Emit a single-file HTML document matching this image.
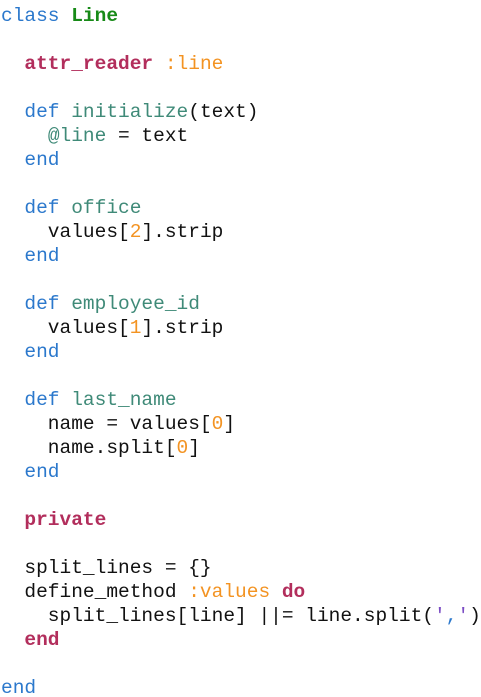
<!DOCTYPE html>
<html><head><meta charset="utf-8"><style>
html,body{margin:0;padding:0;background:#fff;width:481px;height:697px;overflow:hidden}
pre{margin:0;padding:4px 0 0 1px;font-family:"Liberation Mono",monospace;font-size:19.5px;line-height:24px;color:#111}
.k{color:#2b78cc}.c{color:#178a17;font-weight:bold}.r{color:#b22e5c;font-weight:bold}
.s{color:#f39322}.f{color:#3f8a78}.n{color:#f39322}.q{color:#7b4cc4}
</style></head><body><pre><span class="k">class</span> <span class="c">Line</span>

  <span class="r">attr_reader</span> <span class="s">:line</span>

  <span class="k">def</span> <span class="f">initialize</span>(text)
    <span class="f">@line</span> = text
  <span class="k">end</span>

  <span class="k">def</span> <span class="f">office</span>
    values[<span class="n">2</span>].strip
  <span class="k">end</span>

  <span class="k">def</span> <span class="f">employee_id</span>
    values[<span class="n">1</span>].strip
  <span class="k">end</span>

  <span class="k">def</span> <span class="f">last_name</span>
    name = values[<span class="n">0</span>]
    name.split[<span class="n">0</span>]
  <span class="k">end</span>

  <span class="r">private</span>

  split_lines = {}
  define_method <span class="s">:values</span> <span class="r">do</span>
    split_lines[line] ||= line.split(<span class="q">'</span><span class="k">,</span><span class="q">'</span>)
  <span class="r">end</span>

<span class="k">end</span></pre></body></html>
